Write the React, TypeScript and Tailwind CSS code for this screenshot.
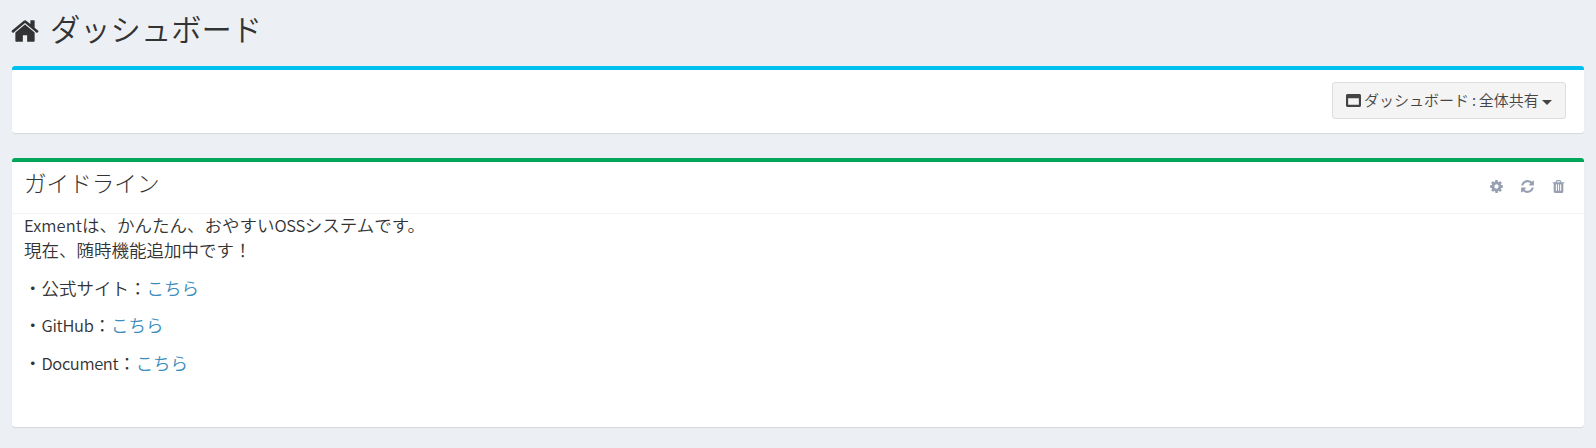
import React from "react";

const HOME =
  "M1472 992v480q0 26-19 45t-45 19h-384v-384h-256v384h-384q-26 0-45-19t-19-45v-480q0-1 .5-3t.5-3l575-474 575 474q1 2 1 6zm223-69l-62 74q-8 9-21 11h-3q-13 0-21-7l-692-577-692 577q-12 8-24 7-13-2-21-11l-62-74q-8-10-7-23.5t11-21.5l719-599q32-26 76-26t76 26l244 204v-195q0-14 9-23t23-9h192q14 0 23 9t9 23v408l219 182q10 8 11 21.5t-7 23.5z";
const COG =
  "M1152 896q0-106-75-181t-181-75-181 75-75 181 75 181 181 75 181-75 75-181zm512-109v222q0 12-8 23t-20 13l-185 28q-19 54-39 91 35 50 107 138 10 12 10 25t-9 23q-27 37-99 108t-94 71q-12 0-26-9l-138-108q-44 23-91 38-16 136-29 186-7 28-36 28h-222q-14 0-24.500-8.500t-11.500-21.500l-28-184q-49-16-90-37l-141 107q-10 9-25 9-14 0-25-11-126-114-165-168-7-10-7-23 0-12 8-23 15-21 51-66.500t54-70.500q-27-50-41-99l-183-27q-13-2-21-12.500t-8-23.500v-222q0-12 8-23t19-13l186-28q14-46 39-92-40-57-107-138-10-12-10-24 0-10 9-23 26-36 98.500-107.500t94.500-71.500q13 0 26 10l138 107q44-23 91-38 16-136 29-186 7-28 36-28h222q14 0 24.500 8.500t11.500 21.500l28 184q49 16 90 37l142-107q9-9 24-9 13 0 25 10 129 119 165 170 7 8 7 22 0 12-8 23-15 21-51 66.500t-54 70.500q26 50 41 98l183 28q13 2 21 12.500t8 23.500z";
const REFRESH =
  "M1639 1056q0 5-1 7-64 268-268 434.500t-478 166.500q-146 0-282.500-55t-243.500-157l-129 129q-19 19-45 19t-45-19-19-45v-448q0-26 19-45t45-19h448q26 0 45 19t19 45-19 45l-137 137q71 66 161 102t187 36q134 0 250-65t186-179q11-17 53-117 8-23 30-23h192q13 0 22.500 9.500t9.500 22.500zm25-800v448q0 26-19 45t-45 19h-448q-26 0-45-19t-19-45 19-45l138-138q-148-137-349-137-134 0-250 65t-186 179q-11 17-53 117-8 23-30 23h-199q-13 0-22.500-9.500t-9.500-22.500v-7q65-268 270-434.500t480-166.500q146 0 284 55.500t245 156.500l130-129q19-19 45-19t45 19 19 45z";
const TRASH =
  "M704 1376v-704q0-14-9-23t-23-9h-64q-14 0-23 9t-9 23v704q0 14 9 23t23 9h64q14 0 23-9t9-23zm256 0v-704q0-14-9-23t-23-9h-64q-14 0-23 9t-9 23v704q0 14 9 23t23 9h64q14 0 23-9t9-23zm256 0v-704q0-14-9-23t-23-9h-64q-14 0-23 9t-9 23v704q0 14 9 23t23 9h64q14 0 23-9t9-23zm-544-992h448l-48-117q-7-9-17-11h-317q-10 2-17 11zm928 32v64q0 14-9 23t-23 9h-96v948q0 83-47 143.500t-113 60.500h-832q-66 0-113-58.500t-47-141.500v-952h-96q-14 0-23-9t-9-23v-64q0-14 9-23t23-9h309l70-167q15-37 54-63t79-26h320q40 0 79 26t54 63l70 167h309q14 0 23 9t9 23z";
const WINDOW =
  "M256 1408h1280v-768h-1280v768zm1536-1120v1216q0 66-47 113t-113 47h-1472q-66 0-113-47t-47-113v-1216q0-66 47-113t113-47h1472q66 0 113 47t47 113z";

function Icon({ d, className }: { d: string; className: string }) {
  return (
    <svg viewBox="0 0 1792 1792" fill="currentColor" aria-hidden="true" className={className}>
      <path d={d} />
    </svg>
  );
}

export default function App() {
  return (
    <div className="flex h-[448px] flex-col bg-[#ecf0f5] px-3 font-['Noto_Sans_CJK_JP',sans-serif] font-[350] text-[#333]">
      <header className="flex h-[66px] items-center pb-[7px]">
        <Icon d={HOME} className="-ml-[2px] mr-[10px] mt-[3px] size-[30px] shrink-0" />
        <h1 className="-mt-[3px] text-[30.3px] leading-none">ダッシュボード</h1>
      </header>

      <section className="flex h-[67px] shrink-0 justify-end rounded-[3px] border-t-4 border-[#00c0ef] bg-white pt-3 pr-[18px] shadow-[0_1px_1px_rgba(0,0,0,0.1)]">
        <button className="flex h-[37px] w-[234px] items-center rounded-[3px] border border-[#ddd] bg-[#f4f4f4] pl-[13px] text-[15px] font-[350] text-[#444]">
          <Icon d={WINDOW} className="mr-[3px] size-[15px] shrink-0" />
          <span className="whitespace-nowrap">ダッシュボード<span className="tracking-[-0.3px]"> : </span>全体共有</span>
          <span className="mt-[3px] ml-[3px] border-x-[5px] border-t-[5px] border-x-transparent border-t-[#444]" />
        </button>
      </section>

      <section className="mt-[25px] h-[269px] shrink-0 rounded-[3px] border-t-4 border-[#00a65a] bg-white shadow-[0_1px_1px_rgba(0,0,0,0.1)]">
        <div className="flex h-[52px] items-center justify-between border-b border-[#f4f4f4] pr-[18px] pl-3">
          <h2 className="pb-[8px] text-[22.6px] leading-none font-light text-[#333]">ガイドライン</h2>
          <div className="flex gap-[16px] pb-[2px] text-[#97a0b3]">
            <Icon d={COG} className="size-[15px]" />
            <Icon d={REFRESH} className="size-[15px]" />
            <Icon d={TRASH} className="size-[15px]" />
          </div>
        </div>
        <div className="-mt-[2px] px-3 text-[17.5px] leading-[25px]">
          <p>
            <span className="text-[16.5px] leading-none tracking-[0.1px]">Exment</span>は、かんたん、おやすい<span className="text-[16.5px] leading-none tracking-[-0.4px]">OSS</span>システムです。
            <br />
            現在、随時機能追加中です！
          </p>
          <p className="mt-[12.5px]">
            ・公式サイト：<a href="#" className="text-[#3c8dbc]">こちら</a>
          </p>
          <p className="mt-[12.5px]">
            ・<span className="text-[16.5px] leading-none tracking-[-0.3px]">GitHub</span>：<a href="#" className="text-[#3c8dbc]">こちら</a>
          </p>
          <p className="mt-[12.5px]">
            ・<span className="text-[16.5px] leading-none tracking-[-0.4px]">Document</span>：<a href="#" className="text-[#3c8dbc]">こちら</a>
          </p>
        </div>
      </section>
    </div>
  );
}
